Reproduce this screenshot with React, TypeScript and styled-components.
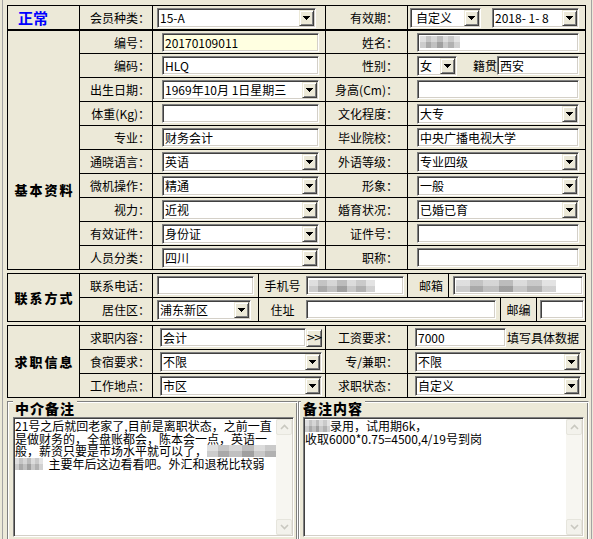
import React from 'react';
import styled, { createGlobalStyle } from 'styled-components';

const FACE = '#ECE9D8';

const GlobalStyle = createGlobalStyle`
  html, body { margin: 0; padding: 0; background: ${FACE}; }
  body { font-family: "Noto Sans CJK SC", "Noto Sans", sans-serif; font-size: 12px; color: #000; }
  *, *::before, *::after { box-sizing: border-box; }
`;

const Frame = styled.div`
  width: 593px;
  height: 539px;
  overflow: hidden;
  padding-left: 2px;
`;

const Panel = styled.div`
  width: 590px;
  height: 539px;
  border-left: 1px solid #a3a3a3;
  border-right: 1px solid #a3a3a3;
  padding: 5px 0 0 4px;
  display: flex;
  flex-direction: column;
  gap: 3px;
`;

const Grid = styled.div<{ $cols: string; $rows: string }>`
  width: 579px;
  flex: none;
  display: grid;
  grid-template-columns: ${p => p.$cols};
  grid-template-rows: ${p => p.$rows};
  gap: 1px;
  background: #000;
  border: 1px solid #000;
`;

const headLine = 'inset 0 -1px 0 #000';

const Status = styled.div`
  background: ${FACE};
  box-shadow: ${headLine};
  display: flex;
  align-items: center;
  padding: 0 0 1px 10px;
  color: #0000ff;
  font-weight: 700;
  font-size: 15px;
`;

const Title = styled.div<{ $span: number; $top?: number }>`
  grid-row: span ${p => p.$span};
  background: ${FACE};
  display: flex;
  justify-content: center;
  align-items: ${p => (p.$top !== undefined ? 'flex-start' : 'center')};
  padding-top: ${p => p.$top ?? 0}px;
  padding-left: 2px;
  font-weight: 900;
  font-size: 13px;
  line-height: 15px;
  letter-spacing: 2px;
`;

const Label = styled.div<{ $pr?: number; $hd?: boolean }>`
  background: ${FACE};
  display: flex;
  align-items: center;
  justify-content: flex-end;
  padding: 0 ${p => p.$pr ?? 2}px ${p => (p.$hd ? 1 : 0)}px 0;
  box-shadow: ${p => (p.$hd ? headLine : 'none')};
  white-space: nowrap;
`;

const Value = styled.div<{ $pl?: number; $pr?: number; $gap?: number; $hd?: boolean }>`
  background: ${FACE};
  display: flex;
  align-items: center;
  min-width: 0;
  gap: ${p => p.$gap ?? 0}px;
  padding: 0 ${p => p.$pr ?? 6}px ${p => (p.$hd ? 1 : 0)}px ${p => p.$pl ?? 9}px;
  box-shadow: ${p => (p.$hd ? headLine : 'none')};
  white-space: nowrap;
`;

const SubRow = styled.div`
  display: flex;
  gap: 1px;
  background: #000;
  min-width: 0;
`;

const Sub = styled.div<{ $w: number; $pl?: number; $pr?: number; $center?: boolean }>`
  flex: none;
  width: ${p => p.$w}px;
  background: ${FACE};
  display: flex;
  align-items: center;
  justify-content: ${p => (p.$center ? 'center' : 'flex-start')};
  padding: 0 ${p => p.$pr ?? 0}px 0 ${p => p.$pl ?? 0}px;
  white-space: nowrap;
`;

const InlineLabel = styled.span<{ $w?: number; $ml?: number }>`
  flex: none;
  width: ${p => (p.$w ? `${p.$w}px` : 'auto')};
  margin-left: ${p => p.$ml ?? 0}px;
  text-align: center;
`;

const Note = styled.span`
  flex: none;
  margin-left: 1px;
`;

const sunken = `
  border: 1px solid;
  border-color: #808080 #ffffff #ffffff #808080;
  box-shadow: inset 1px 1px 0 #404040, inset -1px -1px 0 #d4d0c8;
`;

const raised = `
  border: 1px solid;
  border-color: ${FACE} #404040 #404040 ${FACE};
  box-shadow: inset 1px 1px 0 #ffffff, inset -1px -1px 0 #808080;
`;

const Edit = styled.div<{ $bg?: string; $w?: number }>`
  ${sunken}
  flex: ${p => (p.$w ? 'none' : '1 1 0')};
  width: ${p => (p.$w ? `${p.$w}px` : 'auto')};
  min-width: 0;
  height: 19px;
  background: ${p => p.$bg ?? '#fff'};
  padding: 0 2px;
  line-height: 15px;
  display: flex;
  align-items: center;
  overflow: hidden;
  white-space: nowrap;
`;

const ComboFrame = styled.div<{ $w?: number }>`
  ${sunken}
  flex: ${p => (p.$w ? 'none' : '1 1 0')};
  width: ${p => (p.$w ? `${p.$w}px` : 'auto')};
  min-width: 0;
  height: 20px;
  background: #fff;
  display: flex;
  align-items: center;
  padding: 1px;
`;

const ComboText = styled.span<{ $pl?: number }>`
  flex: 1 1 0;
  min-width: 0;
  padding-left: ${p => p.$pl ?? 1}px;
  line-height: 16px;
  overflow: hidden;
  white-space: nowrap;
`;

const DropBtn = styled.span`
  ${raised}
  flex: none;
  width: 15px;
  height: 16px;
  background: ${FACE};
  display: flex;
  align-items: center;
  justify-content: center;
`;

const PushBtn = styled.span`
  ${raised}
  flex: none;
  width: 16px;
  height: 18px;
  background: ${FACE};
  display: flex;
  align-items: center;
  justify-content: center;
  font-family: "DejaVu Sans", sans-serif;
  font-size: 11px;
  line-height: 14px;
  letter-spacing: -2px;
  padding-right: 1px;
`;

const Blur = styled.span<{ $w: number }>`
  display: inline-block;
  flex: none;
  width: ${p => p.$w}px;
  height: 12px;
  vertical-align: top;
  background:
    linear-gradient(180deg, rgba(255, 255, 255, 0.25) 0 50%, rgba(0, 0, 0, 0.04) 50% 100%),
    linear-gradient(90deg, #d4d4d4 0 14%, #b0b0b0 14% 27%, #c8c8c8 27% 43%, #a6a6a6 43% 57%, #d0d0d0 57% 71%, #b8b8b8 71% 86%, #dadada 86% 100%);
`;

const NotesRow = styled.div`
  display: flex;
  width: 582px;
  flex: none;
`;

const GroupBox = styled.div<{ $pl: number; $pr: number }>`
  position: relative;
  width: 291px;
  height: 142px;
  flex: none;
  border: 1px solid;
  border-color: #808080 #ffffff #ffffff #808080;
  box-shadow: inset 1px 1px 0 #ffffff, inset -1px -1px 0 #808080;
  padding: 15px ${p => p.$pr}px 0 ${p => p.$pl}px;
`;

const GroupTitle = styled.div<{ $left: number }>`
  position: absolute;
  top: -2px;
  left: ${p => p.$left}px;
  padding: 0 2px 0 2px;
  background: ${FACE};
  font-weight: 900;
  font-size: 14px;
  line-height: 16px;
  letter-spacing: 1px;
`;

const Memo = styled.div`
  ${sunken}
  height: 120px;
  background: #fff;
  display: flex;
  padding: 1px;
`;

const MemoText = styled.div`
  flex: 1 1 0;
  min-width: 0;
  padding: 1px 0 0 0;
  line-height: 12.5px;
  font-size: 12px;
`;

const MemoLine = styled.div`
  white-space: pre;
  height: 12.5px;
`;

const ScrollBar = styled.div`
  width: 16px;
  flex: none;
  background: #f7f6f1;
  display: flex;
  flex-direction: column;
  justify-content: space-between;
`;

const ScrollBtn = styled.div`
  height: 16px;
  border: 1px solid #e6e5dd;
  border-radius: 2px;
  background: #f3f2ec;
  display: flex;
  align-items: center;
  justify-content: center;
`;

const Arrow = () => (
  <svg width="7" height="4" viewBox="0 0 7 4" shapeRendering="crispEdges">
    <path d="M0 0h7v1H0zM1 1h5v1H1zM2 2h3v1H2zM3 3h1v1H3z" fill="#000" />
  </svg>
);

const Chevron = ({ up }: { up?: boolean }) => (
  <svg width="9" height="6" viewBox="0 0 9 6">
    <polyline
      points={up ? '1,5 4.5,1.5 8,5' : '1,1 4.5,4.5 8,1'}
      fill="none"
      stroke="#c9c8c0"
      strokeWidth="1.6"
    />
  </svg>
);

const Combo = ({ text, w, pl }: { text?: string; w?: number; pl?: number }) => (
  <ComboFrame $w={w}>
    <ComboText $pl={pl}>{text}</ComboText>
    <DropBtn>
      <Arrow />
    </DropBtn>
  </ComboFrame>
);

const COLS = '71px 72px 172px 81px 177px';

export default function App() {
  return (
    <>
      <GlobalStyle />
      <Frame>
        <Panel>
          {/* 基本资料 */}
          <Grid $cols={COLS} $rows="24px 22px repeat(9, 23px)">
            <Status>正常</Status>
            <Label $hd>会员种类：</Label>
            <Value $hd $pl={4} $pr={9}>
              <Combo text="15-A" />
            </Value>
            <Label $hd $pr={9}>有效期：</Label>
            <Value $hd $pl={2} $pr={6} $gap={11}>
              <Combo text="自定义" w={71} pl={4} />
              <Combo text="2018- 1- 8" />
            </Value>

            <Title $span={10} $top={151}>基本资料</Title>

            <Label>编号：</Label>
            <Value><Edit $bg="#FFFFE1">20170109011</Edit></Value>
            <Label $pr={9}>姓名：</Label>
            <Value><Edit><Blur $w={40} /></Edit></Value>

            <Label>编码：</Label>
            <Value><Edit>HLQ</Edit></Value>
            <Label $pr={9}>性别：</Label>
            <Value>
              <Combo text="女" w={40} />
              <InlineLabel $ml={16}>籍贯</InlineLabel>
              <Edit>西安</Edit>
            </Value>

            <Label>出生日期：</Label>
            <Value><Combo text="1969年10月 1日星期三" /></Value>
            <Label $pr={9}>身高(Cm)：</Label>
            <Value><Edit /></Value>

            <Label>体重(Kg)：</Label>
            <Value><Edit /></Value>
            <Label $pr={9}>文化程度：</Label>
            <Value><Combo text="大专" /></Value>

            <Label>专业：</Label>
            <Value><Edit>财务会计</Edit></Value>
            <Label $pr={9}>毕业院校：</Label>
            <Value><Edit>中央广播电视大学</Edit></Value>

            <Label>通晓语言：</Label>
            <Value><Combo text="英语" /></Value>
            <Label $pr={9}>外语等级：</Label>
            <Value><Combo text="专业四级" /></Value>

            <Label>微机操作：</Label>
            <Value><Combo text="精通" /></Value>
            <Label $pr={9}>形象：</Label>
            <Value><Combo text="一般" /></Value>

            <Label>视力：</Label>
            <Value><Combo text="近视" /></Value>
            <Label $pr={9}>婚育状况：</Label>
            <Value><Combo text="已婚已育" /></Value>

            <Label>有效证件：</Label>
            <Value><Combo text="身份证" /></Value>
            <Label $pr={9}>证件号：</Label>
            <Value><Edit /></Value>

            <Label>人员分类：</Label>
            <Value><Combo text="四川" /></Value>
            <Label $pr={9}>职称：</Label>
            <Value><Edit /></Value>
          </Grid>

          {/* 联系方式 */}
          <Grid $cols="71px 72px 432px" $rows="23px 23px">
            <Title $span={2}>联系方式</Title>
            <Label>联系电话：</Label>
            <SubRow>
              <Sub $w={105} $pl={4} $pr={4}><Edit /></Sub>
              <Sub $w={148} $pr={3}>
                <InlineLabel $w={47}>手机号</InlineLabel>
                <Edit><Blur $w={66} /></Edit>
              </Sub>
              <Sub $w={40} $pl={6} $center>邮箱</Sub>
              <Sub $w={136} $pl={4} $pr={2}><Edit><Blur $w={100} /></Edit></Sub>
            </SubRow>
            <Label>居住区：</Label>
            <SubRow>
              <Sub $w={105} $pl={4} $pr={7}><Combo text="浦东新区" /></Sub>
              <Sub $w={241} $pr={4}>
                <InlineLabel $w={47}>住址</InlineLabel>
                <Edit />
              </Sub>
              <Sub $w={35} $center>邮编</Sub>
              <Sub $w={48} $pl={3} $pr={1}><Edit /></Sub>
            </SubRow>
          </Grid>

          {/* 求职信息 */}
          <Grid $cols={COLS} $rows="23px 23px 23px">
            <Title $span={3}>求职信息</Title>
            <Label>求职内容：</Label>
            <Value $pl={7} $pr={3}>
              <Edit>会计</Edit>
              <PushBtn>&gt;&gt;</PushBtn>
            </Value>
            <Label $pr={9}>工资要求：</Label>
            <Value $pl={7} $pr={4}>
              <Edit $w={91}>7000</Edit>
              <Note>填写具体数据</Note>
            </Value>

            <Label>食宿要求：</Label>
            <Value $pl={7} $pr={3}><Combo text="不限" /></Value>
            <Label $pr={9}>专/兼职：</Label>
            <Value $pl={7} $pr={4}><Combo text="不限" /></Value>

            <Label>工作地点：</Label>
            <Value $pl={7} $pr={3}><Combo text="市区" /></Value>
            <Label $pr={9}>求职状态：</Label>
            <Value $pl={7} $pr={4}><Combo text="自定义" /></Value>
          </Grid>

          {/* 备注 */}
          <NotesRow>
            <GroupBox $pl={5} $pr={3}>
              <GroupTitle $left={5}>中介备注</GroupTitle>
              <Memo>
                <MemoText>
                  <MemoLine>21号之后就回老家了,目前是离职状态，之前一直</MemoLine>
                  <MemoLine>是做财务的，全盘账都会，陈本会一点，英语一</MemoLine>
                  <MemoLine>般，薪资只要是市场水平就可以了，<Blur $w={82} /></MemoLine>
                  <MemoLine><Blur $w={28} />  主要年后这边看看吧。外汇和退税比较弱</MemoLine>
                </MemoText>
                <ScrollBar>
                  <ScrollBtn><Chevron up /></ScrollBtn>
                  <ScrollBtn><Chevron /></ScrollBtn>
                </ScrollBar>
              </Memo>
            </GroupBox>
            <GroupBox $pl={4} $pr={4}>
              <GroupTitle $left={2}>备注内容</GroupTitle>
              <Memo>
                <MemoText>
                  <MemoLine><Blur $w={25} />录用，试用期6k，</MemoLine>
                  <MemoLine>收取6000*0.75=4500,4/19号到岗</MemoLine>
                </MemoText>
                <ScrollBar>
                  <ScrollBtn><Chevron up /></ScrollBtn>
                  <ScrollBtn><Chevron /></ScrollBtn>
                </ScrollBar>
              </Memo>
            </GroupBox>
          </NotesRow>
        </Panel>
      </Frame>
    </>
  );
}
